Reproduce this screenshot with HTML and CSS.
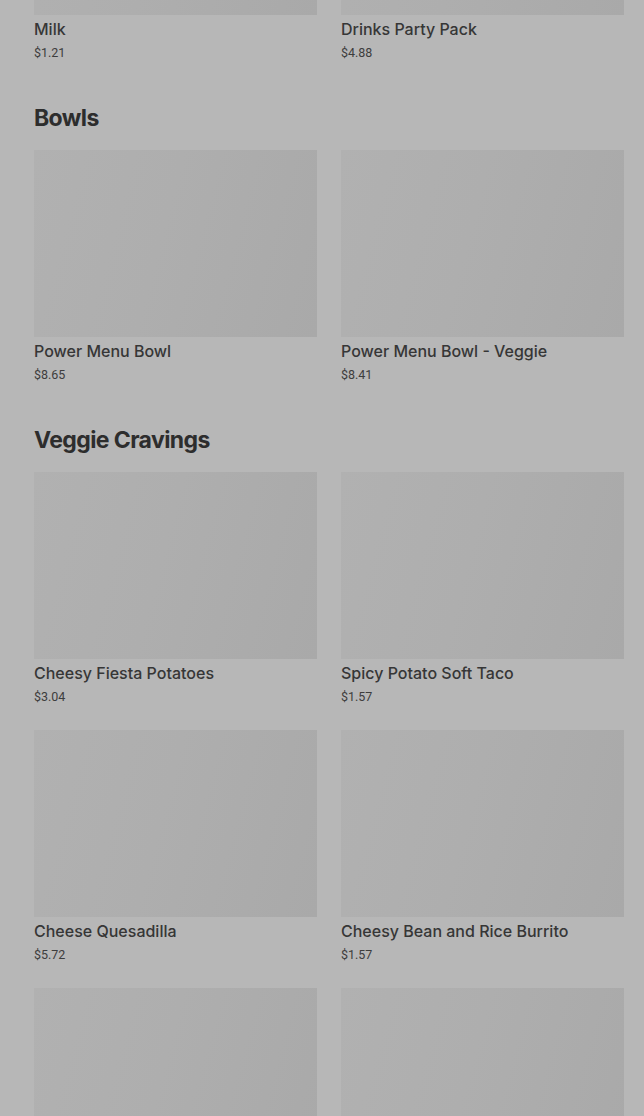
FILE: index.html
```html
<!DOCTYPE html>
<html lang="en">
<head>
<meta charset="utf-8">
<link rel="stylesheet" href="styles.css">
</head>
<body>
<main class="menu">
  <section class="section section--scrolled">
    <div class="grid">
      <div class="card"><div class="thumb"></div><div class="name">Milk</div><div class="price">$1.21</div></div>
      <div class="card"><div class="thumb"></div><div class="name">Drinks Party Pack</div><div class="price">$4.88</div></div>
    </div>
  </section>
  <section class="section">
    <h2 class="heading">Bowls</h2>
    <div class="grid">
      <div class="card"><div class="thumb"></div><div class="name">Power Menu Bowl</div><div class="price">$8.65</div></div>
      <div class="card"><div class="thumb"></div><div class="name">Power Menu Bowl - Veggie</div><div class="price">$8.41</div></div>
    </div>
  </section>
  <section class="section">
    <h2 class="heading">Veggie Cravings</h2>
    <div class="grid">
      <div class="card"><div class="thumb"></div><div class="name">Cheesy Fiesta Potatoes</div><div class="price">$3.04</div></div>
      <div class="card"><div class="thumb"></div><div class="name">Spicy Potato Soft Taco</div><div class="price">$1.57</div></div>
      <div class="card"><div class="thumb"></div><div class="name">Cheese Quesadilla</div><div class="price">$5.72</div></div>
      <div class="card"><div class="thumb"></div><div class="name">Cheesy Bean and Rice Burrito</div><div class="price">$1.57</div></div>
      <div class="card"><div class="thumb"></div></div>
      <div class="card"><div class="thumb"></div></div>
    </div>
  </section>
</main>
</body>
</html>
```
FILE: styles.css
```css
html, body {
  margin: 0;
  padding: 0;
  background: #b7b7b7;
  overflow: hidden;
}
body {
  font-family: Inter, "Liberation Sans", sans-serif;
  color: #333333;
}
.menu {
  padding: 0 20px 0 34px;
  margin-top: -172px;
}
.section {
  display: flex;
  flex-direction: column;
  margin-bottom: 40px;
}
.heading {
  margin: 0 0 16px;
  font-family: Inter, "Liberation Sans", sans-serif;
  font-weight: 700;
  font-size: 23px;
  line-height: 32px;
  letter-spacing: -0.6px;
  color: #2d2d2d;
}
.grid {
  display: grid;
  grid-template-columns: 1fr 1fr;
  column-gap: 24px;
  row-gap: 24px;
}
.card {
  display: flex;
  flex-direction: column;
}
.thumb {
  height: 187px;
  background: linear-gradient(105deg, #b1b1b1 0%, #aeaeae 45%, #a9a9a9 100%);
}
.name {
  margin-top: 4px;
  font-size: 16px;
  font-weight: 500;
  line-height: 20px;
  color: #363636;
}
.price {
  margin-top: 5px;
  font-family: Roboto, "Liberation Sans", sans-serif;
  font-size: 12.5px;
  line-height: 18px;
  color: #3d3d3d;
}
```
